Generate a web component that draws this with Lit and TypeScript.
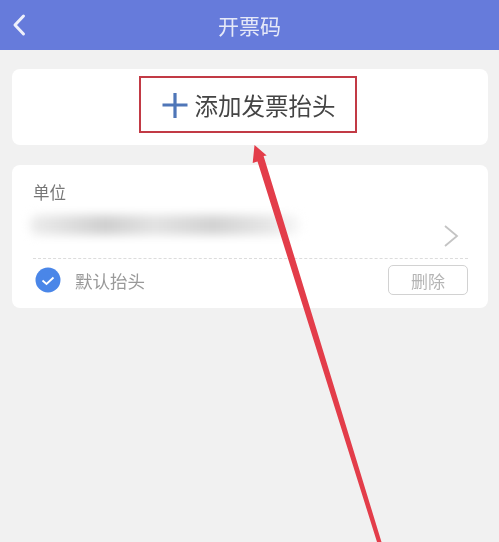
import { LitElement, html, css } from "lit";
import { customElement } from "lit/decorators.js";

@customElement("app-root")
export class AppRoot extends LitElement {
  static styles = css`
    :host {
      display: block;
      position: relative;
      width: 499px;
      height: 542px;
      overflow: hidden;
      background: #f1f1f1;
      font-family: "Noto Sans CJK SC", "Noto Sans", sans-serif;
    }
    .bar {
      height: 50px;
      background: #667bdb;
      display: grid;
      grid-template-columns: 1fr auto 1fr;
      align-items: center;
      padding: 0 12px;
      color: #e6e9f8;
      font-size: 21px;
      box-sizing: border-box;
    }
    .back { display: block; width: 14px; height: 24px; }
    .title { filter: blur(0.5px); }
    .content {
      display: flex;
      flex-direction: column;
      gap: 20px;
      padding: 19px 11px 0 12px;
    }
    .card {
      background: #fff;
      border-radius: 8px;
    }
    .add {
      height: 76px;
      display: flex;
      justify-content: center;
      padding-top: 7px;
      box-sizing: border-box;
    }
    .add-box {
      width: 218px;
      height: 57px;
      box-sizing: border-box;
      border: 2px solid #c23a45;
      display: flex;
      align-items: center;
      justify-content: center;
      gap: 7px;
      color: #444;
      font-size: 23.5px;
      margin-left: -5px;
      padding-left: 2px;
    }
    .add-label { filter: blur(0.5px); }
    .plus { width: 26px; height: 26px; display: block; flex: none; }
    .item {
      height: 143px;
      padding: 16px 20px 0 21px;
      box-sizing: border-box;
      display: flex;
      flex-direction: column;
    }
    .unit {
      font-size: 16.5px;
      line-height: 22px;
      color: #777;
      filter: blur(0.6px);
    }
    .name-row {
      height: 54px;
      margin-top: 1px;
      display: flex;
      align-items: center;
      justify-content: space-between;
      padding-right: 9px;
    }
    .smudge {
      width: 270px;
      height: 20px;
      margin-left: -3px;
      margin-top: -12px;
      border-radius: 8px;
      background: linear-gradient(90deg, #ededed 0%, #cfcfcf 28%, #e2e2e2 46%, #d2d2d2 68%, #e6e6e6 88%, #f8f8f8 100%);
      filter: blur(5px);
    }
    .chev { width: 16px; height: 24px; display: block; margin-top: 10px; }
    .dash {
      border-top: 1px dashed #dcdcdc;
    }
    .foot {
      display: flex;
      align-items: center;
      margin-top: 6px;
    }
    .check { width: 26px; height: 26px; display: block; margin-left: 2px; }
    .default {
      margin-left: 14px;
      font-size: 17.5px;
      color: #999;
      filter: blur(0.6px);
    }
    .del {
      margin-left: auto;
      width: 80px;
      height: 30px;
      box-sizing: border-box;
      border: 1.5px solid #d2d2d2;
      border-radius: 5px;
      display: flex;
      align-items: center;
      justify-content: center;
      font-size: 17px;
      color: #b5b5b5;
    }
    .del span { filter: blur(0.6px); }
    .arrow {
      position: absolute;
      left: 0;
      top: 0;
      width: 499px;
      height: 542px;
      pointer-events: none;
    }
  `;

  render() {
    return html`
      <div class="bar">
        <svg class="back" viewBox="0 0 14 24">
          <path d="M11.5 3 3 12l8.5 9" fill="none" stroke="#eef0fb" stroke-width="3" stroke-linecap="round" stroke-linejoin="round" />
        </svg>
        <span class="title">开票码</span>
        <span></span>
      </div>
      <div class="content">
        <div class="card add">
          <div class="add-box">
            <svg class="plus" viewBox="0 0 26 26">
              <path d="M0.5 13h25M13 1v25" fill="none" stroke="#4f76b8" stroke-width="3.2" />
            </svg>
            <span class="add-label">添加发票抬头</span>
          </div>
        </div>
        <div class="card item">
          <div class="unit">单位</div>
          <div class="name-row">
            <div class="smudge"></div>
            <svg class="chev" viewBox="0 0 16 24">
              <path d="M2 2l12 10L2 22" fill="none" stroke="#c4c4c4" stroke-width="1.8" />
            </svg>
          </div>
          <div class="dash"></div>
          <div class="foot">
            <svg class="check" viewBox="0 0 26 26">
              <circle cx="13" cy="13" r="12.5" fill="#4a86e8" />
              <path d="M7.5 13.5l4 3.5 7-6.5" fill="none" stroke="#fff" stroke-width="1.8" />
            </svg>
            <span class="default">默认抬头</span>
            <div class="del"><span>删除</span></div>
          </div>
        </div>
      </div>
      <svg class="arrow" viewBox="0 0 499 542">
        <path d="M254.5 145 266.7 155.5 263.6 156 381.5 542 377 542 257.5 161.5 252.7 163Z" fill="#e33d4a" />
      </svg>
    `;
  }
}
